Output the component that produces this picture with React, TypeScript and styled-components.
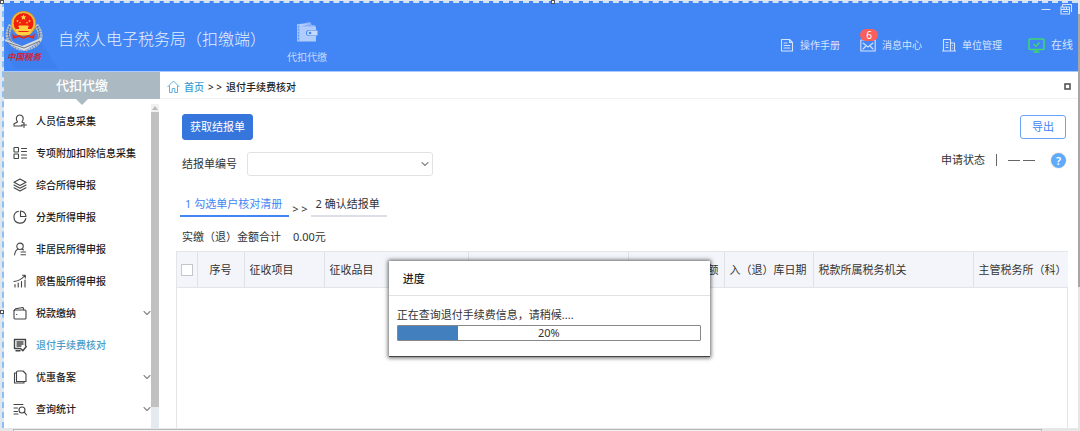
import React from 'react';
import styled, { createGlobalStyle, css } from 'styled-components';

const GlobalStyle = createGlobalStyle`
  * { box-sizing: border-box; }
  body {
    margin: 0;
    background: #fff;
    color: #333;
    font-family: "Noto Sans", "Noto Sans CJK SC", sans-serif;
    font-size: 11px;
    line-height: 16px;
  }
  button, select, input { font: inherit; margin: 0; }
  a { color: inherit; text-decoration: none; }
  svg { display: block; flex: none; }
`;

const Frame = styled.div`
  position: relative;
  display: grid;
  grid-template-columns: 4px minmax(0, 1fr) 2px;
  grid-template-rows: minmax(0, 1fr) 3px;
  min-height: 100vh;
  padding-top: 1px;
  background: #dfe6ee;
`;

const LeftEdge = styled.div`
  margin-left: 2px;
  border-left: 2px dashed #8cc0f4;
`;

const Handle = styled.span<{ $left: string; $top: string }>`
  position: absolute;
  left: ${(p) => p.$left};
  top: ${(p) => p.$top};
  width: 4px;
  height: 4px;
  border: 1px solid #555;
  background: #fff;
`;

const AppWindow = styled.div`
  display: flex;
  flex-direction: column;
  background: #fff;
`;

const RightEdge = styled.div`
  display: flex;
  flex-direction: column;
  padding-top: 13px;
  background: #e6e6e6;
`;

const RightThumb = styled.div`
  height: 66%;
  background: #a6a6a6;
`;

const BottomEdge = styled.div`
  grid-column: 1 / -1;
  padding: 1px 38px 0 13px;
  background: #e6e6e6;
`;

const BottomThumb = styled.div`
  height: 2px;
  border: 1px solid #b9b9b9;
  border-bottom: 0;
  background: #f0f0f0;
`;

const Header = styled.header`
  position: relative;
  display: flex;
  align-items: stretch;
  height: 71px;
  padding-right: 5px;
  border-top: 2px dashed #d3e2fb;
  border-bottom: 1px solid #a9c8fb;
  background: #4285f5;
  color: #d5e4fd;
`;

const Brand = styled.div`
  display: flex;
  align-items: center;
  color: #e2edff;
`;

const BrandName = styled.h1`
  margin: 0 21px 0 0;
  padding-top: 4px;
  font-size: 16px;
  font-weight: 300;
  line-height: 24px;
  white-space: nowrap;
`;

const ModuleButton = styled.button`
  display: flex;
  flex-direction: column;
  align-items: center;
  gap: 6px;
  padding: 19px 0 0;
  border: 0;
  background: none;
  color: #c6dafc;
  font-size: 10px;
  white-space: nowrap;
`;

const HeaderNav = styled.nav`
  display: flex;
  align-items: center;
  gap: 20px;
  margin-left: auto;
  padding-top: 16px;
`;

const NavLink = styled.a`
  position: relative;
  display: flex;
  align-items: center;
  gap: 6px;
  font-size: 10px;
  white-space: nowrap;
`;

const OnlineState = styled.span`
  display: flex;
  align-items: center;
  gap: 6px;
  margin-left: 6px;
  white-space: nowrap;
`;

const Badge = styled.span`
  position: absolute;
  left: 0;
  top: -8px;
  width: 18px;
  height: 12px;
  border-radius: 6px;
  background: #fb5f5c;
  color: #fff;
  line-height: 12px;
  text-align: center;
`;

const WindowControls = styled.div`
  position: absolute;
  right: 6px;
  top: 0;
  display: flex;
  gap: 9px;
`;

const PlainButton = styled.button`
  display: flex;
  padding: 0;
  border: 0;
  background: none;
  color: inherit;
`;

const Body = styled.div`
  display: grid;
  flex: 1;
  grid-template-columns: 156px minmax(0, 1fr);
`;

const Sidebar = styled.aside`
  display: flex;
  flex-direction: column;
`;

const SidebarTitle = styled.h2`
  position: relative;
  height: 27px;
  margin: 0;
  background: #abb9c2;
  color: #fff;
  font-size: 13px;
  font-weight: 500;
  line-height: 26px;
  text-align: center;

  &::after {
    content: "";
    position: absolute;
    left: 50%;
    top: 100%;
    margin-left: -6px;
    border: 6px solid transparent;
    border-top-color: #abb9c2;
    border-bottom: 0;
  }
`;

const SidebarBody = styled.div`
  display: flex;
  flex: 1;
  padding-top: 5px;
`;

const Menu = styled.ul`
  flex: 1;
  margin: 0;
  padding: 1px 0 0 9px;
  list-style: none;
`;

const MenuLink = styled.a<{ $active?: boolean }>`
  display: flex;
  align-items: center;
  height: 32px;
  gap: 9px;
  font-size: 10px;
  font-weight: 500;
  color: #222;
  white-space: nowrap;

  svg { color: #444; }
  svg:last-child:not(:first-child) { margin-left: auto; color: #888; }

  ${(p) => p.$active && css`color: #4c9cca;`}
`;

const Scrollbar = styled.div`
  display: flex;
  flex-direction: column;
  width: 8px;
  margin-right: 1px;
  background: #e4eaf0;
`;

const ScrollArrow = styled.div`
  display: flex;
  align-items: center;
  justify-content: center;
  height: 8px;
  background: #f0f0f0;
  color: #bbb;
`;

const ScrollThumb = styled.div`
  height: 91%;
  background: #c1c1c1;
`;

const Main = styled.main`
  display: flex;
  flex-direction: column;
`;

const Breadcrumb = styled.nav`
  display: flex;
  align-items: center;
  gap: 4px;
  height: 27px;
  padding: 3px 7px 0;
  border-bottom: 1px solid #f1f1f1;
  color: #222;
  font-size: 10px;
  font-weight: 500;

  a { color: #389dd2; }
  button { margin-left: auto; color: #555; }
`;

const Content = styled.div`
  display: flex;
  flex: 1;
  flex-direction: column;
  padding: 15px 10px 0 16px;
`;

const Toolbar = styled.div`
  display: flex;
  align-items: center;
  justify-content: space-between;
  padding: 0 2px 0 6px;
`;

const Button = styled.button<{ $primary?: boolean }>`
  height: ${(p) => (p.$primary ? 26 : 24)}px;
  padding: ${(p) => (p.$primary ? '0 7px' : '0 11px')};
  border: 1px solid ${(p) => (p.$primary ? '#3675dc' : '#6ba1f7')};
  border-radius: 3px;
  background: ${(p) => (p.$primary ? '#3675dc' : '#fff')};
  color: ${(p) => (p.$primary ? '#fff' : '#4285f5')};
  white-space: nowrap;
`;

const FilterRow = styled.div`
  display: flex;
  align-items: flex-start;
  justify-content: space-between;
  height: 36px;
  padding: 12px 2px 0 6px;
`;

const Field = styled.label`
  display: flex;
  align-items: center;
  gap: 10px;
  white-space: nowrap;
`;

const SelectBox = styled.span`
  display: grid;
  align-items: center;

  > * { grid-area: 1 / 1; }
  svg { justify-self: end; margin-right: 4px; color: #888; pointer-events: none; }
`;

const Select = styled.select`
  width: 186px;
  height: 24px;
  padding: 0 16px 0 6px;
  border: 1px solid #e2e2e2;
  border-radius: 3px;
  appearance: none;
  background: #fff;
  color: inherit;
`;

const Status = styled.div`
  display: flex;
  align-items: center;
  gap: 11px;
  white-space: nowrap;
`;

const Divider = styled.span`
  width: 1px;
  height: 12px;
  background: #666;
`;

const EmptyValue = styled.span`
  display: flex;
  gap: 3px;
  margin-right: 5px;

  &::before, &::after {
    content: "";
    width: 12px;
    height: 1px;
    background: #666;
  }
`;

const HelpButton = styled.button`
  width: 15px;
  height: 15px;
  padding: 0;
  border: 0;
  border-radius: 50%;
  background: #5fabfb;
  box-shadow: 0 0 0 1px #fdf0e4;
  color: #fff;
  font-weight: 600;
  line-height: 15px;
`;

const Steps = styled.div`
  display: flex;
  align-items: flex-end;
  gap: 3px;
  padding: 17px 0 0 4px;
`;

const Step = styled.button<{ $active?: boolean }>`
  height: 24px;
  padding: 0 7px 0 5px;
  border: 0;
  border-bottom: ${(p) => (p.$active ? '2px solid #4285f5' : '2px solid #dcdfe8')};
  background: none;
  color: ${(p) => (p.$active ? '#4285f5' : '#333')};
  white-space: nowrap;
`;

const Total = styled.p`
  display: flex;
  gap: 12px;
  margin: 0;
  padding: 12px 6px 6px;
`;

const TableBox = styled.div`
  flex: 1;
  border: 1px solid #e3e5e9;
  border-bottom: 0;
`;

const Table = styled.table`
  width: 100%;
  border-collapse: collapse;
  table-layout: fixed;
`;

const HeadCell = styled.th<{ $align?: string }>`
  height: 35px;
  padding: 2px 5px 0;
  border-right: 1px solid #dfe1e6;
  border-bottom: 1px solid #e3e5e9;
  background: #f3f5fa;
  font-weight: 400;
  text-align: ${(p) => p.$align ?? 'left'};
  white-space: nowrap;
  overflow: hidden;

  &:last-child { border-right: 0; padding-right: 0; }
`;

const Checkbox = styled.input`
  display: block;
  width: 12px;
  height: 12px;
  margin-left: -1px;
  border: 1px solid #c4c6ca;
  appearance: none;
  background: #fff;
`;

const Dialog = styled.section`
  position: absolute;
  left: 36%;
  top: 261px;
  width: 321px;
  background: #fff;
  border-bottom: 1px solid #444;
  box-shadow: 0 0 4px 1px rgba(0, 0, 0, 0.6);
`;

const DialogTitle = styled.h3`
  margin: 0;
  padding: 10px 14px 8px;
  border-bottom: 1px solid #e2e2e2;
  color: #222;
  font-size: 11px;
  font-weight: 500;
`;

const DialogBody = styled.div`
  padding: 11px 9px 15px 8px;
`;

const Message = styled.p`
  margin: 0;
`;

const Progress = styled.div`
  display: grid;
  height: 16px;
  margin-top: 2px;
  border: 1px solid #888;
  border-radius: 1px;
  line-height: 14px;
  text-align: center;

  > * { grid-area: 1 / 1; }
`;

const ProgressBar = styled.div`
  background: #417fbe;
`;

const Stroke = ({ w = 14, h = 14, box = '0 0 14 14', children }: {
  w?: number; h?: number; box?: string; children: React.ReactNode;
}) => (
  <svg width={w} height={h} viewBox={box} fill="none" stroke="currentColor" strokeWidth="1.1"
    strokeLinecap="round" strokeLinejoin="round" aria-hidden="true">{children}</svg>
);

const Chevron = () => (
  <Stroke w={8} h={8} box="0 0 8 8"><path d="M1 2.500 4 5.500 7 2.500" /></Stroke>
);

const Emblem = () => (
  <svg width="54" height="68" viewBox="0 0 54 68" aria-hidden="true">
    <path d="M22 14 54 66H10L3 44Z" fill="#3f80f0" />
    <g fill="none" stroke="#b9bec4" strokeWidth="4.6" strokeDasharray="2 .6">
      <path d="M7 22C-1 36 8 43 18 46" />
      <path d="M32 22C42 36 33 43 21 46" />
    </g>
    <g fill="none" stroke="#4d5b70" strokeWidth=".7">
      <path d="M6 23C1 35 8 41 18 45M33 23C39 35 33 41 22 45" />
    </g>
    <path d="M0 36 18 43 37 35 38 37 20 48 2 39Z" fill="#d9dcdf" />
    <path d="M2 39 20 45 36 38" fill="none" stroke="#555f70" strokeWidth=".8" />
    <circle cx="19.500" cy="20.500" r="12.500" fill="#d99a25" />
    <circle cx="19.500" cy="20.500" r="11.500" fill="#f2c340" />
    <circle cx="19.500" cy="20" r="10" fill="#f0210f" />
    <path d="m19.500 11.500 .8 1.800 2 .2-1.500 1.300.5 2-1.800-1-1.800 1 .5-2-1.500-1.300 2-.2Z" fill="#ffdc4a" />
    <g fill="#ffd03f">
      <circle cx="13.500" cy="18" r=".9" /><circle cx="25.500" cy="18" r=".9" />
      <circle cx="16" cy="19.800" r=".8" /><circle cx="23" cy="19.800" r=".8" />
      <path d="M15 22.500h9l1 1.500h-1v2h3v2H12v-2h3v-2h-1Z" />
      <path d="M11 29h17l-3 3H14Z" />
    </g>
    <path d="M8 30c2 4 5 3 7 2l4.500 2 4.500-2c2 1 5 2 7-2l-1 6-6-2-4.500 2-4.500-2-6 2Z" fill="#e8291b" />
    <text x="3" y="57" fontSize="8.500" fontWeight="700" fontStyle="italic" fill="#cf2338"
      fontFamily='"Noto Sans CJK SC", sans-serif'>中国税务</text>
  </svg>
);

const Wallet = () => (
  <svg width="22" height="21" viewBox="0 0 22 21" aria-hidden="true">
    <path d="M1 2h4l9-2 2 3h3v4H1Z" fill="#86b1f8" />
    <path d="M1 2v17.500h19V14h-7a3 3 0 0 1 0-6h7V4.500H5L15 1.500" fill="#b0ccfb" />
    <path d="M1 2h3v17H1Z" fill="#9dc0fa" />
    <path d="M2.500 4v15" stroke="#5b93f3" strokeDasharray="1.500 1.500" />
    <path d="M13.500 8.500H21.500v5h-8a2.500 2.500 0 0 1 0-5Z" fill="#c6dafc" />
    <circle cx="14" cy="11" r="1.300" fill="#4285f5" />
  </svg>
);

const menu = [
  { label: '人员信息采集', icon: <><path d="M4.500 8C2 4 4 1 6.800 1S11.500 4 9 8M4.500 8 1 9.800V12h8M9 8l1 .6M11 8.500v5M8.500 11h5" /></> },
  { label: '专项附加扣除信息采集', icon: <><rect x="1" y="1.500" width="4.500" height="4.500" rx=".5" /><rect x="1" y="8" width="4.500" height="4.500" rx=".5" /><path d="M8.500 2.500h5M8.500 5.500h5M8.500 9h5M8.500 12h5" /></> },
  { label: '综合所得申报', icon: <><path d="M7 1 13 4.200 7 7.500 1 4.200ZM1 7l6 3.200L13 7M1 9.800 7 13l6-3.200" /></> },
  { label: '分类所得申报', icon: <><path d="M5.500 1.300A6 6 0 1 0 12.800 8.500M7.500 1v5.500H13A6 6 0 0 0 7.500 1Z" /></> },
  { label: '非居民所得申报', icon: <><circle cx="7" cy="4.300" r="3.200" /><path d="M5 7C3 8 2 10 1.500 13M9 7l1.500 1M8 10h4.500M8 12.800h4.500" /></> },
  { label: '限售股所得申报', icon: <><path d="M2 10.500V13M5.200 9v4M8.500 7.500V13M12 6v7M1 7.500C5 7 9 5 12 1.500M9.500 1.300H12.300V4" /></> },
  { label: '税款缴纳', more: true, icon: <><rect x="1" y="4" width="12" height="9" rx="1" /><path d="M1 4.500 2.500 2.800 10 1.500l.8 2.300M3.500 8.500h.3" /></> },
  { label: '退付手续费核对', active: true, icon: <><path d="M12.500 7.500V1.500h-11v9h5M4 4h6M4 6h6M4 8h4M3 12.800h4M7.500 10.500l2.300 2.300 3.500-4.300" strokeWidth="1.400" /></> },
  { label: '优惠备案', more: true, icon: <><path d="M5 1h5l3 3v7.500H3.500V2.500A1.500 1.500 0 0 1 5 1ZM3.500 3H1.500v10H11v-1.500" /></> },
  { label: '查询统计', more: true, icon: <><path d="M1 2.500h9M1 6h3.500M1 9.500h3.500M1 12h4" /><circle cx="9" cy="8" r="3" /><path d="m11.200 10.200 2.300 2.600" /></> },
];

const columns: { label: string; width: number; align?: string }[] = [
  { label: '序号', width: 47, align: 'center' },
  { label: '征收项目', width: 80 },
  { label: '征收品目', width: 144 },
  { label: '', width: 160 },
  { label: '实缴（退）金额', width: 96, align: 'right' },
  { label: '入（退）库日期', width: 89 },
  { label: '税款所属税务机关', width: 160 },
  { label: '主管税务所（科）', width: 95 },
];

const progress = 20;

export default function App() {
  return (
    <>
      <GlobalStyle />
      <Frame>
        <LeftEdge />
        <AppWindow>
          <Header>
            <Brand>
              <Emblem />
              <BrandName>自然人电子税务局（扣缴端）</BrandName>
            </Brand>
            <ModuleButton type="button"><Wallet />代扣代缴</ModuleButton>
            <HeaderNav>
              <NavLink href="#manual">
                <Stroke><path d="M1.500 1.500h8l3 3v8.500h-11ZM9.500 1.500v3h3M4 5h3M4 7.500h6M4 10h6" /></Stroke>操作手册
              </NavLink>
              <NavLink href="#messages">
                <Stroke w={16} box="0 0 16 14"><path d="M.8 2h14.400v11H.8ZM3 5l5 4 5-4M3 11l2.500-2.500M13 11l-2.500-2.500" /></Stroke>消息中心
                <Badge>6</Badge>
              </NavLink>
              <NavLink href="#units">
                <Stroke><path d="M1.500 13V1.500h7V13M8.500 5H12.500v8M.5 13h13M4 4.500h2M4 7h2M4 9.500h2M10.500 7.500v0M10.500 10v0" /></Stroke>单位管理
              </NavLink>
              <OnlineState>
                <svg width="17" height="15" viewBox="0 0 17 15" fill="none" stroke="#3fd872" strokeWidth="1.500" aria-hidden="true">
                  <rect x="1" y="1" width="15" height="10.500" rx="1" /><path d="M5.500 6 8 8.200 11.500 4.500M8.500 11.500V14M5.500 14h6" />
                </svg>
                在线
              </OnlineState>
            </HeaderNav>
            <WindowControls>
              <PlainButton type="button" aria-label="最小化"><Stroke w={10} h={12} box="0 0 10 12"><path d="M1 6.500h8" /></Stroke></PlainButton>
              <PlainButton type="button" aria-label="还原"><Stroke w={12} h={12} box="0 0 12 12"><path d="M1 4h8.500v7H1ZM1 6.500h8.500M2.500 4V1.500h9V8.500M3.500 8.500h4M4 4v2M6.500 4v2" /></Stroke></PlainButton>
            </WindowControls>
          </Header>
          <Body>
            <Sidebar>
              <SidebarTitle>代扣代缴</SidebarTitle>
              <SidebarBody>
                <Menu>
                  {menu.map((m) => (
                    <li key={m.label}>
                      <MenuLink href="#menu" $active={m.active}>
                        <Stroke>{m.icon}</Stroke>
                        <span>{m.label}</span>
                        {m.more && <Chevron />}
                      </MenuLink>
                    </li>
                  ))}
                </Menu>
                <Scrollbar>
                  <ScrollArrow><svg width="6" height="4" viewBox="0 0 6 4"><path d="M3 0 6 4H0Z" fill="currentColor" /></svg></ScrollArrow>
                  <ScrollThumb />
                </Scrollbar>
              </SidebarBody>
            </Sidebar>
            <Main>
              <Breadcrumb>
                <svg width="13" height="13" viewBox="0 0 13 13" fill="none" stroke="#5fb0dc" strokeWidth="1" aria-hidden="true">
                  <path d="M.5 7 6.500 1l6 6M2.500 5.500v7h2.700V8.500h2.600v4h2.700v-7" />
                </svg>
                <a href="#home">首页</a>
                <span>&gt; &gt;</span>
                <span>退付手续费核对</span>
                <PlainButton type="button" aria-label="最大化">
                  <svg width="7" height="7" viewBox="0 0 7 7"><rect x="1" y="1" width="5" height="5" fill="#fff" stroke="currentColor" strokeWidth="1.600" /></svg>
                </PlainButton>
              </Breadcrumb>
              <Content>
                <Toolbar>
                  <Button type="button" $primary>获取结报单</Button>
                  <Button type="button">导出</Button>
                </Toolbar>
                <FilterRow>
                  <Field>
                    结报单编号
                    <SelectBox>
                      <Select defaultValue=""><option value="" /></Select>
                      <Chevron />
                    </SelectBox>
                  </Field>
                  <Status>
                    <span>申请状态</span>
                    <Divider />
                    <EmptyValue />
                    <HelpButton type="button" aria-label="帮助">?</HelpButton>
                  </Status>
                </FilterRow>
                <Steps>
                  <Step type="button" $active>1 勾选单户核对清册</Step>
                  <span>&gt; &gt;</span>
                  <Step type="button">2 确认结报单</Step>
                </Steps>
                <Total><span>实缴（退）金额合计</span><span>0.00元</span></Total>
                <TableBox>
                  <Table>
                    <colgroup>
                      <col width={20} />
                      {columns.map((c, i) => <col key={i} width={c.width} />)}
                    </colgroup>
                    <thead>
                      <tr>
                        <HeadCell><Checkbox type="checkbox" aria-label="全选" /></HeadCell>
                        {columns.map((c, i) => <HeadCell key={i} $align={c.align}>{c.label}</HeadCell>)}
                      </tr>
                    </thead>
                  </Table>
                </TableBox>
              </Content>
            </Main>
          </Body>
        </AppWindow>
        <RightEdge><RightThumb /></RightEdge>
        <BottomEdge><BottomThumb /></BottomEdge>
        <Handle $left="0" $top="0" />
        <Handle $left="51%" $top="0" />
        <Handle $left="0" $top="72%" />
        <Dialog role="dialog" aria-label="进度">
          <DialogTitle>进度</DialogTitle>
          <DialogBody>
            <Message>正在查询退付手续费信息，请稍候....</Message>
            <Progress role="progressbar" aria-valuenow={progress}>
              <ProgressBar style={{ width: `${progress}%` }} />
              <span>{progress}%</span>
            </Progress>
          </DialogBody>
        </Dialog>
      </Frame>
    </>
  );
}
